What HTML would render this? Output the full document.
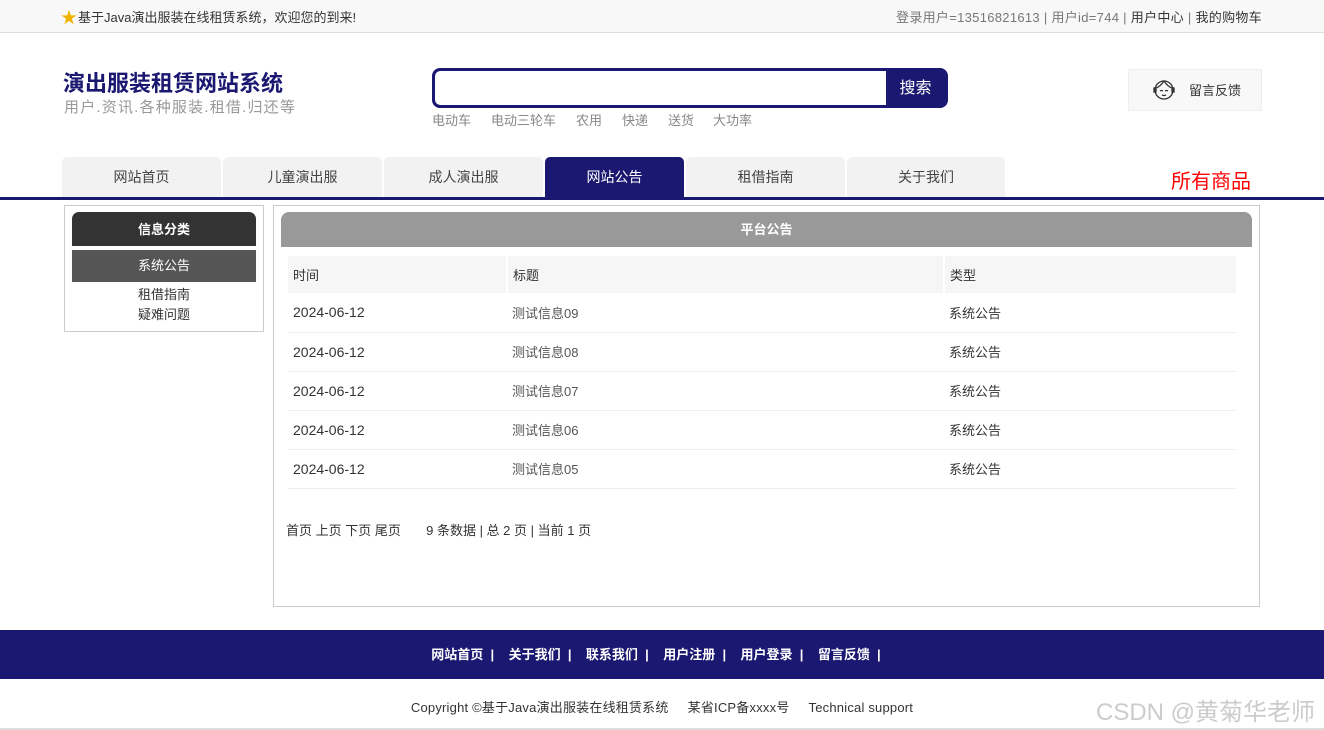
<!DOCTYPE html>
<html><head><meta charset="utf-8"><style>
*{margin:0;padding:0;box-sizing:border-box}
body{width:1324px;height:730px;overflow:hidden;background:#fff;font-family:"Liberation Sans","Noto Sans CJK SC",sans-serif;font-size:13px;color:#333;position:relative}
.a{position:absolute;white-space:nowrap}
.top{position:absolute;left:0;top:0;width:1324px;height:33px;background:#f8f8f8;border-bottom:1px solid #ddd}
.tab{position:absolute;top:157px;height:40px;background:#f2f2f2;border-radius:5px 5px 0 0;text-align:center;line-height:40px;font-size:14px;color:#444}
table{border-collapse:collapse}
</style></head><body>
<div class="top"></div>
<div class="a" style="left:61px;top:4px;font-size:16px;color:#f0b400">★</div>
<div class="a" style="left:78px;top:7px;color:#333">基于Java演出服装在线租赁系统，欢迎您的到来!</div>
<div class="a" style="right:62px;top:7px;color:#777;letter-spacing:0.3px">登录用户=13516821613 | 用户id=744 | <span style="color:#333">用户中心</span> | <span style="color:#333">我的购物车</span></div>
<div class="a" style="left:63px;top:66px;font-size:22px;font-weight:bold;color:#1a1870">演出服装租赁网站系统</div>
<div class="a" style="left:64px;top:96px;font-size:15px;color:#999;letter-spacing:1.2px">用户.资讯.各种服装.租借.归还等</div>
<div class="a" style="left:432px;top:68px;width:516px;height:40px;border:3px solid #1a1870;border-radius:8px;background:#1a1870;overflow:hidden"><div style="position:absolute;left:0;top:0;width:451px;height:34px;background:#fff;border-radius:5px 0 0 5px"></div><div style="position:absolute;left:451px;top:0;width:59px;height:34px;color:#fff;font-size:16px;text-align:center;line-height:36px">搜索</div></div>
<div class="a" style="left:432px;top:110px;color:#888">电动车</div>
<div class="a" style="left:491px;top:110px;color:#888">电动三轮车</div>
<div class="a" style="left:576px;top:110px;color:#888">农用</div>
<div class="a" style="left:622px;top:110px;color:#888">快递</div>
<div class="a" style="left:668px;top:110px;color:#888">送货</div>
<div class="a" style="left:713px;top:110px;color:#888">大功率</div>
<div class="a" style="left:1128px;top:69px;width:134px;height:42px;background:#f8f8f8;border:1px solid #eee"></div>
<svg class="a" style="left:1151px;top:76px" width="26" height="26" viewBox="0 0 26 26" fill="none" stroke="#333" stroke-width="1.3"><circle cx="13" cy="14" r="9"/><path d="M5 12c3-1 6-4 8-7 2 3 5 6 8 7"/><path d="M9 15q1.5-1 3 0M14 15q1.5-1 3 0M11 19q2 1 4 0"/><rect x="3" y="12" width="2" height="4" fill="#333"/><rect x="21" y="12" width="2" height="4" fill="#333"/></svg>
<div class="a" style="left:1189px;top:80px;color:#333">留言反馈</div>
<div class="tab" style="left:62px;width:159px">网站首页</div>
<div class="tab" style="left:223px;width:159px">儿童演出服</div>
<div class="tab" style="left:384px;width:159px">成人演出服</div>
<div class="tab" style="left:545px;width:139px;background:#1a1870;color:#fff">网站公告</div>
<div class="tab" style="left:686px;width:159px">租借指南</div>
<div class="tab" style="left:847px;width:158px">关于我们</div>
<div class="a" style="left:1171px;top:165px;font-size:20px;color:#f00">所有商品</div>
<div class="a" style="left:0;top:197px;width:1324px;height:3px;background:#1a1870"></div>
<div class="a" style="left:64px;top:205px;width:200px;height:127px;border:1px solid #ccc"></div>
<div class="a" style="left:72px;top:212px;width:184px;height:34px;background:#333;border-radius:7px 7px 0 0;color:#fff;font-weight:bold;text-align:center;line-height:35px">信息分类</div>
<div class="a" style="left:72px;top:250px;width:184px;height:32px;background:#555;color:#fff;text-align:center;line-height:32px">系统公告</div>
<div class="a" style="left:72px;top:285px;width:184px;text-align:center;line-height:20px">租借指南<br>疑难问题</div>
<div class="a" style="left:273px;top:205px;width:987px;height:402px;border:1px solid #ccc"></div>
<div class="a" style="left:281px;top:212px;width:971px;height:35px;background:#999;border-radius:8px 8px 0 0;color:#fff;font-weight:bold;text-align:center;line-height:36px">平台公告</div>
<table class="a" style="left:288px;top:256px;width:948px">
<tr style="background:#f6f6f6;height:37px"><td style="width:219px;padding-left:5px;border-right:2px solid #fff">时间</td><td style="width:437px;padding-left:5px;border-right:2px solid #fff">标题</td><td style="padding-left:5px">类型</td></tr>
<tr style="height:39px;border-bottom:1px solid #eee"><td style="padding-left:5px;font-size:14px">2024-06-12</td><td style="padding-left:5px;color:#555">测试信息09</td><td style="padding-left:5px">系统公告</td></tr>
<tr style="height:39px;border-bottom:1px solid #eee"><td style="padding-left:5px;font-size:14px">2024-06-12</td><td style="padding-left:5px;color:#555">测试信息08</td><td style="padding-left:5px">系统公告</td></tr>
<tr style="height:39px;border-bottom:1px solid #eee"><td style="padding-left:5px;font-size:14px">2024-06-12</td><td style="padding-left:5px;color:#555">测试信息07</td><td style="padding-left:5px">系统公告</td></tr>
<tr style="height:39px;border-bottom:1px solid #eee"><td style="padding-left:5px;font-size:14px">2024-06-12</td><td style="padding-left:5px;color:#555">测试信息06</td><td style="padding-left:5px">系统公告</td></tr>
<tr style="height:39px;border-bottom:1px solid #eee"><td style="padding-left:5px;font-size:14px">2024-06-12</td><td style="padding-left:5px;color:#555">测试信息05</td><td style="padding-left:5px">系统公告</td></tr>
</table>
<div class="a" style="left:286px;top:520px">首页 上页 下页 尾页&nbsp;&nbsp;&nbsp;&nbsp;&nbsp;&nbsp;&nbsp;9 条数据 | 总 2 页 | 当前 1 页</div>
<div class="a" style="left:0;top:630px;width:1324px;height:49px;background:#1a1870;color:#fff;font-weight:bold;text-align:center;line-height:50px;padding-right:12px">网站首页&nbsp;&nbsp;|&nbsp;&nbsp;&nbsp;&nbsp;关于我们&nbsp;&nbsp;|&nbsp;&nbsp;&nbsp;&nbsp;联系我们&nbsp;&nbsp;|&nbsp;&nbsp;&nbsp;&nbsp;用户注册&nbsp;&nbsp;|&nbsp;&nbsp;&nbsp;&nbsp;用户登录&nbsp;&nbsp;|&nbsp;&nbsp;&nbsp;&nbsp;留言反馈&nbsp;&nbsp;|</div>
<div class="a" style="left:0;top:697px;width:1324px;text-align:center;color:#333;letter-spacing:0.2px">Copyright ©基于Java演出服装在线租赁系统&nbsp;&nbsp;&nbsp;&nbsp;&nbsp;某省ICP备xxxx号&nbsp;&nbsp;&nbsp;&nbsp;&nbsp;Technical support</div>
<div class="a" style="left:0;top:728px;width:1324px;height:2px;background:#ddd"></div>
<div class="a" style="left:1096px;top:692px;font-size:24px;color:#ccc">CSDN @黄菊华老师</div>
</body></html>
